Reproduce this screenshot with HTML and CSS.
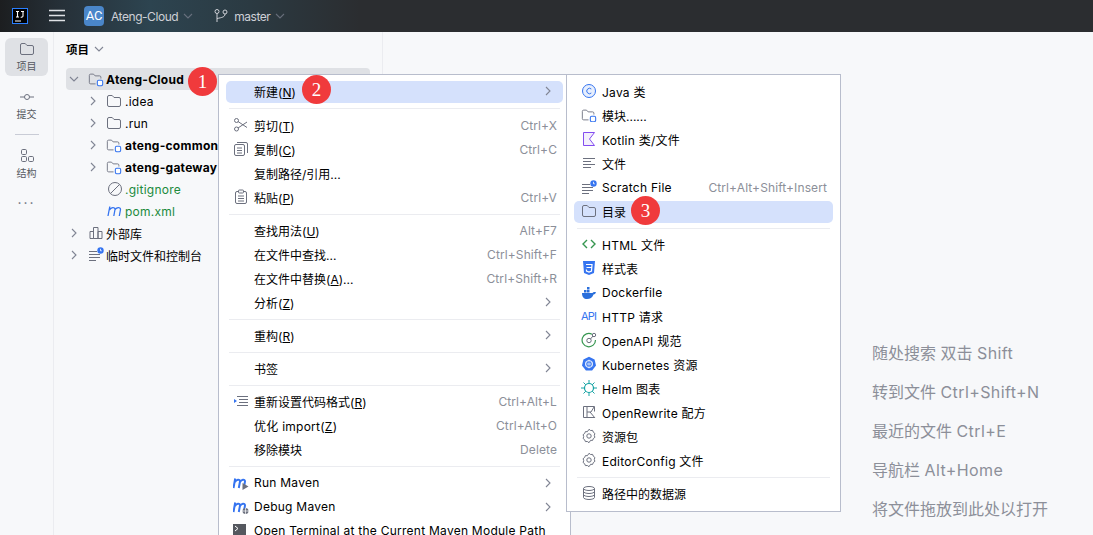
FILE: index.html

```html
<!DOCTYPE html>
<html lang="zh-CN">
<head>
  <meta charset="UTF-8">
  <title>Ateng-Cloud</title>
  <link rel="stylesheet" href="styles.css">
</head>
<body>
  <svg class="defs" width="0" height="0">
    <symbol id="folder" viewBox="0 0 16 16"><path d="M1.5 4a1.5 1.5 0 0 1 1.5-1.5h3.2l1.8 2h5a1.5 1.5 0 0 1 1.5 1.5v6a1.5 1.5 0 0 1-1.5 1.5H3A1.5 1.5 0 0 1 1.500 12z" fill="none" stroke="#6c707e"/></symbol>
    <symbol id="module" viewBox="0 0 18 16"><path d="M8.500 13.500H3A1.500 1.500 0 0 1 1.500 12V4A1.500 1.500 0 0 1 3 2.500h3.200l1.800 2h5A1.500 1.500 0 0 1 14.500 6v1.500" fill="none" stroke="#6c707e"/><rect x="10.500" y="9.500" width="6" height="6" rx="1.500" fill="#fff" stroke="#3574f0" stroke-width="1.200"/></symbol>
    <symbol id="chev-r" viewBox="0 0 10 10"><path d="M3 1l4 4-4 4" fill="none" stroke="#818594" stroke-width="1.100"/></symbol>
    <symbol id="chev-d" viewBox="0 0 10 10"><path d="M1 3l4 4 4-4" fill="none" stroke="#818594" stroke-width="1.100"/></symbol>
    <symbol id="lines" viewBox="0 0 16 16"><path d="M2 3.500h12M2 6.500h8M2 9.500h12M2 12.500h8" fill="none" stroke="#6c707e"/></symbol>
    <symbol id="scratch" viewBox="0 0 16 16"><path d="M1 4.500h8M1 7.500h11M1 10.500h11M1 13.500h7" fill="none" stroke="#6c707e"/><circle cx="12.500" cy="3.500" r="3.200" fill="#3574f0"/><path d="M12.500 1.800v2h1.300" fill="none" stroke="#fff" stroke-width=".8"/></symbol>
    <symbol id="gear" viewBox="0 0 16 16"><path d="M8 1.300l1.600 1.200 2-.1.700 1.800 1.600 1.300-.6 1.900.6 1.900-1.600 1.300-.7 1.800-2-.1L8 14.700l-1.600-1.200-2 .1-.7-1.800-1.600-1.300.6-1.900-.6-1.900 1.600-1.300.7-1.800 2 .1z" fill="none" stroke="#6c707e"/><circle cx="8" cy="8" r="2.200" fill="none" stroke="#6c707e"/></symbol>
    <symbol id="maven" viewBox="0 0 16 16"><path d="M1 13l1.800-9.500M2.500 7c1.300-2.500 5.500-3.500 5.500-.5L6.800 13M7.800 7c1.300-2.500 5.700-3.500 5.700-.5L12.300 13" fill="none" stroke="#3574f0" stroke-width="1.300"/></symbol>
    <symbol id="maven-b" viewBox="0 0 16 16"><path d="M.5 13l1.700-9.500M2 7c1.200-2.500 5-3.500 5-.5L5.800 13M7 7c1.200-2.500 5-3.500 5-.5L10.800 13" fill="none" stroke="#3574f0" stroke-width="2"/></symbol>
  </svg>

  <header class="titlebar">
    <svg class="ij-logo" width="16" height="16" viewBox="0 0 16 16"><rect x=".5" y=".5" width="15" height="15" fill="#000" stroke="#2a7fff"/><path d="M3 13h6" stroke="#fff"/><path d="M4 3.500h3M5.500 3.500v5.500M4 9h3M9 3.500h3M11 3.500v4.500a1.300 1.300 0 0 1-2.200 .8" fill="none" stroke="#fff" stroke-width="1.100"/></svg>
    <svg class="burger" width="16" height="14" viewBox="0 0 16 14"><path d="M0 1.500h16M0 6.500h16M0 11.500h16" stroke="#dfe1e5" stroke-width="1.300"/></svg>
    <span class="project-badge">AC</span>
    <span class="title-text">Ateng-Cloud</span>
    <svg class="title-chev" width="10" height="10"><use href="#chev-d"/></svg>
    <svg class="branch" width="16" height="16" viewBox="0 0 16 16"><circle cx="4" cy="3.500" r="2" fill="none" stroke="#ced0d6"/><circle cx="12" cy="4" r="2" fill="none" stroke="#ced0d6"/><path d="M4 5.500V14M12 6c0 3-3 3.500-8 4.500" fill="none" stroke="#ced0d6"/></svg>
    <span class="title-text">master</span>
    <svg class="title-chev" width="10" height="10"><use href="#chev-d"/></svg>
  </header>

  <div class="workspace">
    <nav class="toolstrip">
      <div class="tool active">
        <svg width="16" height="16"><use href="#folder"/></svg>
        <span>项目</span>
      </div>
      <div class="tool">
        <svg width="16" height="16" viewBox="0 0 16 16"><circle cx="8" cy="8" r="2.500" fill="none" stroke="#6c707e"/><path d="M1 8h4.500M10.500 8H15" stroke="#6c707e"/></svg>
        <span>提交</span>
      </div>
      <div class="tool-sep"></div>
      <div class="tool">
        <svg width="16" height="16" viewBox="0 0 16 16"><rect x="2.500" y="1.500" width="5" height="5" rx="1.200" fill="none" stroke="#6c707e"/><rect x="2.500" y="8.500" width="5" height="5" rx="1.200" fill="none" stroke="#6c707e"/><rect x="9.500" y="8.500" width="5" height="5" rx="1.200" fill="none" stroke="#6c707e"/></svg>
        <span>结构</span>
      </div>
      <div class="tool-more">···</div>
    </nav>

    <aside class="project-panel">
      <div class="panel-head">项目 <svg width="10" height="10"><use href="#chev-d"/></svg></div>
      <ul class="tree">
        <li class="selected"><svg class="arrow" width="10" height="10"><use href="#chev-d"/></svg><svg width="16" height="16"><use href="#module"/></svg><b>Ateng-Cloud</b></li>
        <li class="lvl"><svg class="arrow" width="10" height="10"><use href="#chev-r"/></svg><svg width="16" height="16"><use href="#folder"/></svg>.idea</li>
        <li class="lvl"><svg class="arrow" width="10" height="10"><use href="#chev-r"/></svg><svg width="16" height="16"><use href="#folder"/></svg>.run</li>
        <li class="lvl"><svg class="arrow" width="10" height="10"><use href="#chev-r"/></svg><svg width="16" height="16"><use href="#module"/></svg><b>ateng-common</b></li>
        <li class="lvl"><svg class="arrow" width="10" height="10"><use href="#chev-r"/></svg><svg width="16" height="16"><use href="#module"/></svg><b>ateng-gateway</b></li>
        <li class="lvl file"><svg width="16" height="16" viewBox="0 0 16 16"><circle cx="8" cy="8" r="6.500" fill="none" stroke="#6c707e"/><path d="M3.500 12.500l9-9" stroke="#6c707e"/></svg><span class="vcs">.gitignore</span></li>
        <li class="lvl file"><svg width="16" height="16"><use href="#maven"/></svg><span class="vcs">pom.xml</span></li>
        <li class="zh"><svg class="arrow" width="10" height="10"><use href="#chev-r"/></svg><svg width="16" height="16" viewBox="0 0 16 16"><path d="M2 6.500h3.500v7H2zM5.500 2.500H10v11H5.500zM10 6.500h4v7h-4z" fill="none" stroke="#6c707e"/></svg>外部库</li>
        <li class="zh"><svg class="arrow" width="10" height="10"><use href="#chev-r"/></svg><svg width="16" height="16"><use href="#scratch"/></svg>临时文件和控制台</li>
      </ul>
    </aside>

    <main class="editor">
      <p>随处搜索 双击 <span class="en">Shift</span></p>
      <p>转到文件 <span class="en">Ctrl+Shift+N</span></p>
      <p>最近的文件 <span class="en">Ctrl+E</span></p>
      <p>导航栏 <span class="en">Alt+Home</span></p>
      <p>将文件拖放到此处以打开</p>
    </main>
  </div>

  <div class="menu menu-main">
    <div class="row hl"><i class="ico"></i><span class="lbl zh">新建(<u>N</u>)</span><svg class="sub" width="10" height="10"><use href="#chev-r"/></svg></div>
    <div class="sep first"></div>
    <div class="row"><svg class="ico" width="16" height="16" viewBox="0 0 16 16"><circle cx="3.500" cy="3.500" r="2" fill="none" stroke="#6c707e"/><circle cx="3.500" cy="12" r="2" fill="none" stroke="#6c707e"/><path d="M5 4.500l9 6M5 11l9-6" fill="none" stroke="#6c707e"/></svg><span class="lbl zh">剪切(<u>T</u>)</span><kbd>Ctrl+X</kbd></div>
    <div class="row"><svg class="ico" width="16" height="16" viewBox="0 0 16 16"><rect x="1.500" y="3.500" width="10" height="11" rx="1.500" fill="none" stroke="#6c707e"/><path d="M4 1.500h9a1.500 1.500 0 0 1 1.500 1.500v9M4 7h5M4 9.500h5M4 12h5" fill="none" stroke="#6c707e"/></svg><span class="lbl zh">复制(<u>C</u>)</span><kbd>Ctrl+C</kbd></div>
    <div class="row"><i class="ico"></i><span class="lbl zh">复制路径/引用...</span></div>
    <div class="row"><svg class="ico" width="16" height="16" viewBox="0 0 16 16"><rect x="2.500" y="2.500" width="11" height="12" rx="1.500" fill="none" stroke="#6c707e"/><rect x="5.500" y="1" width="5" height="3" rx=".8" fill="#f7f8fa" stroke="#6c707e"/><path d="M5 7h6M5 9.500h6M5 12h6" stroke="#6c707e"/></svg><span class="lbl zh">粘贴(<u>P</u>)</span><kbd>Ctrl+V</kbd></div>
    <div class="sep"></div>
    <div class="row"><i class="ico"></i><span class="lbl zh">查找用法(<u>U</u>)</span><kbd>Alt+F7</kbd></div>
    <div class="row"><i class="ico"></i><span class="lbl zh">在文件中查找...</span><kbd>Ctrl+Shift+F</kbd></div>
    <div class="row"><i class="ico"></i><span class="lbl zh">在文件中替换(<u>A</u>)...</span><kbd>Ctrl+Shift+R</kbd></div>
    <div class="row"><i class="ico"></i><span class="lbl zh">分析(<u>Z</u>)</span><svg class="sub" width="10" height="10"><use href="#chev-r"/></svg></div>
    <div class="sep"></div>
    <div class="row"><i class="ico"></i><span class="lbl zh">重构(<u>R</u>)</span><svg class="sub" width="10" height="10"><use href="#chev-r"/></svg></div>
    <div class="sep"></div>
    <div class="row"><i class="ico"></i><span class="lbl zh">书签</span><svg class="sub" width="10" height="10"><use href="#chev-r"/></svg></div>
    <div class="sep"></div>
    <div class="row"><svg class="ico" width="16" height="16" viewBox="0 0 16 16"><path d="M4 3.500h11M6 6.500h9M6 9.500h9M4 12.500h11" stroke="#6c707e"/><path d="M1 6l3 2-3 2z" fill="#3574f0"/></svg><span class="lbl zh">重新设置代码格式(<u>R</u>)</span><kbd>Ctrl+Alt+L</kbd></div>
    <div class="row"><i class="ico"></i><span class="lbl">优化 import(<u>Z</u>)</span><kbd>Ctrl+Alt+O</kbd></div>
    <div class="row"><i class="ico"></i><span class="lbl zh">移除模块</span><kbd>Delete</kbd></div>
    <div class="sep"></div>
    <div class="row latin"><svg class="ico" width="16" height="16" viewBox="0 0 16 16"><use href="#maven-b"/><path d="M9.500 8l6 3.500-6 3.500z" fill="#6c707e"/></svg><span class="lbl">Run Maven</span><svg class="sub" width="10" height="10"><use href="#chev-r"/></svg></div>
    <div class="row latin"><svg class="ico" width="16" height="16" viewBox="0 0 16 16"><use href="#maven-b"/><circle cx="12.500" cy="12" r="3" fill="#6c707e"/><path d="M9 12h7M12.500 9v6" stroke="#fff" stroke-width=".7"/></svg><span class="lbl">Debug Maven</span><svg class="sub" width="10" height="10"><use href="#chev-r"/></svg></div>
    <div class="row latin"><svg class="ico" width="16" height="16" viewBox="0 0 16 16"><rect x="0" y="1" width="13" height="11" fill="#55585f"/><path d="M2 3l3 2.500L2 8" fill="none" stroke="#fff"/><path d="M10 14h5" stroke="#3574f0" stroke-width="2"/></svg><span class="lbl">Open Terminal at the Current Maven Module Path</span></div>
  </div>

  <div class="menu menu-new">
    <div class="row"><svg class="ico" width="16" height="16" viewBox="0 0 16 16"><circle cx="8" cy="8" r="6.500" fill="#e7effd" stroke="#3574f0"/><path d="M10.300 6a2.700 2.700 0 1 0 0 4" fill="none" stroke="#3574f0"/></svg><span class="lbl">Java 类</span></div>
    <div class="row"><svg class="ico" width="16" height="16" viewBox="0 0 18 16"><use href="#module"/></svg><span class="lbl zh">模块......</span></div>
    <div class="row"><svg class="ico" width="16" height="16" viewBox="0 0 16 16"><path d="M2.500 1.500h11L8.500 8l5 6.500h-11z" fill="#f3effc" stroke="#834df0"/></svg><span class="lbl">Kotlin 类/文件</span></div>
    <div class="row"><svg class="ico" width="16" height="16"><use href="#lines"/></svg><span class="lbl zh">文件</span></div>
    <div class="row latin"><svg class="ico" width="16" height="16"><use href="#scratch"/></svg><span class="lbl">Scratch File</span><kbd>Ctrl+Alt+Shift+Insert</kbd></div>
    <div class="row hl"><svg class="ico" width="16" height="16"><use href="#folder"/></svg><span class="lbl zh">目录</span></div>
    <div class="sep"></div>
    <div class="row"><svg class="ico" width="16" height="16" viewBox="0 0 16 16"><path d="M6 4L2 8l4 4M10 4l4 4-4 4" fill="none" stroke="#369650" stroke-width="1.400"/></svg><span class="lbl">HTML 文件</span></div>
    <div class="row"><svg class="ico" width="16" height="16" viewBox="0 0 16 16"><path d="M2 1h12l-1 12-5 2-5-2z" fill="#3574f0"/><path d="M5 4.500h6l-.5 6.500L8 12l-2.500-1-.1-1.500M5.500 7.500h5" fill="none" stroke="#fff" stroke-width="1.200"/></svg><span class="lbl zh">样式表</span></div>
    <div class="row latin"><svg class="ico" width="16" height="16" viewBox="0 0 16 16"><path d="M1 8h10.500c.5-1 1.500-1.300 3.500-.8-.5 1.500-1.500 2.200-2.500 2.300C11.500 12.500 9 14 6 14c-3 0-5-2-5-6z" fill="#2a6fdb"/><path d="M3 5h2.500v2.500H3zM6 5h2.500v2.500H6zM6 2h2.500v2.500H6z" fill="#2a6fdb"/></svg><span class="lbl">Dockerfile</span></div>
    <div class="row"><span class="ico api">API</span><span class="lbl">HTTP 请求</span></div>
    <div class="row"><svg class="ico" width="16" height="16" viewBox="0 0 16 16"><path d="M11 2.200A6.700 6.700 0 1 0 14.500 8" fill="none" stroke="#369650" stroke-width="1.200"/><circle cx="8" cy="8.500" r="2.200" fill="none" stroke="#6c707e"/><path d="M9.500 7l2.500-3" stroke="#6c707e"/><circle cx="13" cy="3" r="1.700" fill="none" stroke="#6c707e"/></svg><span class="lbl">OpenAPI 规范</span></div>
    <div class="row"><svg class="ico" width="16" height="16" viewBox="0 0 16 16"><path d="M8 .8l5.600 2.700L15 9.600l-3.900 4.900H4.900L1 9.600l1.400-6.100z" fill="#3574f0"/><circle cx="8" cy="8" r="3.500" fill="none" stroke="#fff"/><path d="M8 3.500v9M3.800 6l8.400 4M12.200 6l-8.400 4" stroke="#cfe0fc" stroke-width=".7"/></svg><span class="lbl">Kubernetes 资源</span></div>
    <div class="row"><svg class="ico" width="16" height="16" viewBox="0 0 16 16"><circle cx="8" cy="8" r="4.500" fill="none" stroke="#14a3a3" stroke-width="1.200"/><path d="M8 0v3.500M8 12.500V16M0 8h3M13 8h3M2.500 2.500l2.300 2.300M13.500 2.500l-2.300 2.300M2.500 13.500l2.300-2.300M13.500 13.500l-2.300-2.300" stroke="#14a3a3"/></svg><span class="lbl">Helm 图表</span></div>
    <div class="row"><svg class="ico" width="16" height="16" viewBox="0 0 16 16"><path d="M2.500 2.500h11v5M2.500 2.500v11h11" fill="none" stroke="#6c707e"/><path d="M6 2.500v11M6 8h4l3-5M9 8l5 6" fill="none" stroke="#6c707e"/></svg><span class="lbl">OpenRewrite 配方</span></div>
    <div class="row"><svg class="ico" width="16" height="16"><use href="#gear"/></svg><span class="lbl zh">资源包</span></div>
    <div class="row"><svg class="ico" width="16" height="16"><use href="#gear"/></svg><span class="lbl">EditorConfig 文件</span></div>
    <div class="sep"></div>
    <div class="row"><svg class="ico" width="16" height="16" viewBox="0 0 16 16"><ellipse cx="8" cy="3.500" rx="5.500" ry="2" fill="none" stroke="#6c707e"/><path d="M2.500 3.500v9c0 1.100 2.500 2 5.500 2s5.500-.9 5.500-2v-9M2.500 6.500c0 1.100 2.500 2 5.500 2s5.500-.9 5.500-2M2.500 9.500c0 1.100 2.500 2 5.500 2s5.500-.9 5.500-2" fill="none" stroke="#6c707e"/></svg><span class="lbl zh">路径中的数据源</span></div>
  </div>

  <span class="step step-1">1</span>
  <span class="step step-2">2</span>
  <span class="step step-3">3</span>
</body>
</html>
```

FILE: styles.css

```css
* {
  box-sizing: border-box;
}
html, body {
  height: 100%;
}
body {
  margin: 0;
  overflow: hidden;
  display: flex;
  flex-direction: column;
  position: relative;
  background: #f7f8fa;
  color: #000;
  font-family: Inter, "Noto Sans CJK SC", sans-serif;
  font-size: 12px;
  letter-spacing: .25px;
}
.defs {
  position: absolute;
}
svg {
  flex: none;
  display: block;
}
.zh {
  letter-spacing: 0;
}

/* title bar */
.titlebar {
  height: 32px;
  flex: none;
  display: flex;
  align-items: center;
  padding-left: 12px;
  color: #dfe1e5;
  background: linear-gradient(90deg, #1c1e20 0, #263038 60px, #2d4450 150px, #2b3a42 250px, #2b2d30 360px);
}
.burger {
  margin-left: 21px;
}
.project-badge {
  width: 20px;
  height: 20px;
  margin-left: 19px;
  border-radius: 4px;
  background: #4a86c9;
  color: #fff;
  font-family: Roboto, sans-serif;
  font-size: 13px;
  letter-spacing: -.3px;
  line-height: 20px;
  text-align: center;
}
.title-text {
  margin-left: 7px;
  font-size: 12px;
  letter-spacing: -.45px;
  color: #ced0d6;
}
.title-chev {
  margin-left: 5px;
  opacity: .7;
}
.branch {
  margin-left: 20px;
  margin-right: -2px;
}

.workspace {
  flex: 1;
  display: flex;
  min-height: 0;
}

/* left tool strip */
.toolstrip {
  width: 54px;
  flex: none;
  padding: 6px 5px 0;
  border-right: 1px solid #ebecf0;
  display: flex;
  flex-direction: column;
  align-items: center;
}
.tool {
  width: 43px;
  height: 38px;
  flex: none;
  border-radius: 6px;
  display: flex;
  flex-direction: column;
  align-items: center;
  padding-top: 3px;
  font-size: 10px;
  letter-spacing: 0;
  line-height: 15px;
  color: #55585f;
  margin-bottom: 10px;
}
.tool span {
  margin-top: 2px;
}
.tool.active {
  background: #dfe1e5;
}
.tool-sep {
  width: 24px;
  height: 1px;
  flex: none;
  background: #c9ccd6;
  margin-bottom: 10px;
}
.tool-more {
  font-size: 14px;
  letter-spacing: 2px;
  line-height: 20px;
  color: #6c707e;
}

/* project tree */
.project-panel {
  width: 329px;
  flex: none;
  border-right: 1px solid #ebecf0;
  padding: 0 12px;
}
.panel-head {
  height: 33px;
  display: flex;
  align-items: center;
  gap: 5px;
  font-weight: 600;
  font-size: 11.500px;
  letter-spacing: 0;
}
.tree {
  list-style: none;
  margin: 3px 0 0;
  padding: 0;
  width: 304px;
}
.tree li {
  height: 22px;
  display: flex;
  align-items: center;
  padding-left: 3px;
  white-space: nowrap;
  overflow: hidden;
}
.tree li .arrow {
  margin-right: 9px;
}
.tree li svg + svg {
  margin-right: 2px;
}
.tree li.selected {
  background: #dfe1e5;
  border-radius: 4px;
}
.tree li.lvl {
  padding-left: 22px;
}
.tree li.lvl .arrow {
  margin-right: 8px;
}
.tree li.lvl svg + svg {
  margin-right: 3px;
}
.tree li.file {
  padding-left: 41px;
}
.tree li.file svg {
  margin-right: 2px;
}
.vcs {
  color: #208a3c;
}

/* editor hints */
.editor {
  flex: 1;
  padding: 310px 0 0 489px;
  color: #8c8f99;
  font-size: 16px;
  letter-spacing: 0;
  white-space: nowrap;
}
.editor p {
  margin: 0 0 16px;
  line-height: 23px;
}
.en {
  letter-spacing: .4px;
}

/* popup menus */
.menu {
  position: absolute;
  top: 74px;
  background: #fff;
  border: 1px solid #b8bdcc;
  padding: 5px 7px 0;
  overflow: hidden;
}
.menu-main {
  left: 218px;
  width: 353px;
  height: 470px;
}
.menu-new {
  left: 566px;
  width: 275px;
  height: 438px;
}
.row {
  height: 24px;
  display: flex;
  align-items: center;
  padding: 0 6px 2px 7px;
  white-space: nowrap;
}
.row.latin {
  padding-bottom: 1px;
}
.row.hl {
  height: 22px;
  margin: 1px 0;
  border-radius: 5px;
  background: #d5e1fc;
}
.ico {
  width: 16px;
  height: 16px;
  flex: none;
  margin-right: 5px;
  display: block;
}
.api {
  color: #3574f0;
  font-size: 11px;
  line-height: 16px;
  letter-spacing: -.8px;
}
.lbl {
  flex: 1;
}
u {
  text-underline-offset: 1px;
}
kbd {
  font: inherit;
  letter-spacing: .1px;
  color: #8c8f99;
}
.sub {
  margin-right: 4px;
}
.sep {
  height: 9px;
  margin: 0 3px;
  position: relative;
}
.sep.first {
  height: 10px;
}
.sep::after {
  content: "";
  position: absolute;
  left: 0;
  right: 0;
  top: 4px;
  height: 1px;
  background: #ebecf0;
}

/* red step markers */
.step {
  position: absolute;
  width: 29px;
  height: 29px;
  border-radius: 50%;
  background: #f03a3c;
  color: #fff;
  font-family: "Liberation Serif", serif;
  font-size: 19px;
  line-height: 29px;
  letter-spacing: 0;
  text-align: center;
}
.step-1 {
  left: 188px;
  top: 67px;
}
.step-2 {
  left: 302px;
  top: 75px;
}
.step-3 {
  left: 631px;
  top: 196px;
}
```
